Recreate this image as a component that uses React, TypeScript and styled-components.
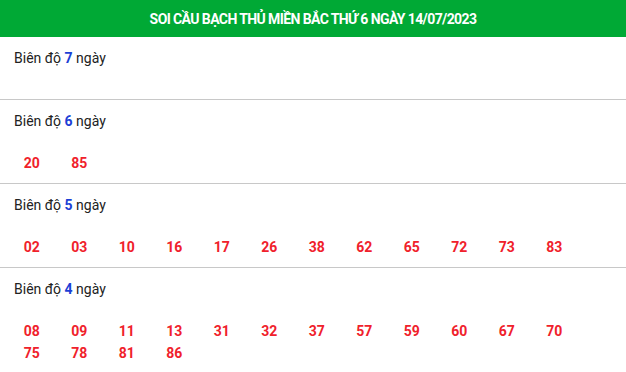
import styled, { createGlobalStyle } from "styled-components";

const GlobalStyle = createGlobalStyle`
  body {
    margin: 0;
    background: #fff;
    font-family: Roboto, "Noto Sans", sans-serif;
  }
`;

const rows = [
  { days: 7, numbers: [] as string[] },
  { days: 6, numbers: ["20", "85"] },
  { days: 5, numbers: ["02", "03", "10", "16", "17", "26", "38", "62", "65", "72", "73", "83"] },
  { days: 4, numbers: ["08", "09", "11", "13", "31", "32", "37", "57", "59", "60", "67", "70", "75", "78", "81", "86"] },
];

export default function App () {
  return (
    <Wrapper>
      <GlobalStyle />
      <Header>SOI CẦU BẠCH THỦ MIỀN BẮC THỨ 6 NGÀY 14/07/2023</Header>
      {rows.map(row => (
        <Row key={row.days}>
          <Label>
            Biên độ <Days>{row.days}</Days> ngày
          </Label>
          <Numbers>
            {row.numbers.map(n => (
              <Num key={n}>{n}</Num>
            ))}
          </Numbers>
        </Row>
      ))}
    </Wrapper>
  )
}

const Wrapper = styled.div`
  width: 626px;
`;

const Header = styled.div`
  height: 37px;
  background: #00a935;
  color: #fff;
  font-weight: 700;
  font-size: 14px;
  letter-spacing: -0.6px;
  display: flex;
  align-items: center;
  justify-content: center;
`;

const Row = styled.div`
  padding: 11px 0 9px;
  border-bottom: 1px solid #c8c8c8;
`;

const Label = styled.div`
  padding-left: 14px;
  font-size: 14px;
  line-height: 20px;
  color: #222;
`;

const Days = styled.b`
  color: #1c3fd6;
`;

const Numbers = styled.div`
  margin-top: 21px;
  min-height: 1px;
  padding-left: 8px;
  display: flex;
  flex-wrap: wrap;
  width: 580px;
`;

const Num = styled.span`
  width: 47.5px;
  text-align: center;
  font-size: 14px;
  font-weight: 700;
  line-height: 22px;
  color: #f0212b;
`;
